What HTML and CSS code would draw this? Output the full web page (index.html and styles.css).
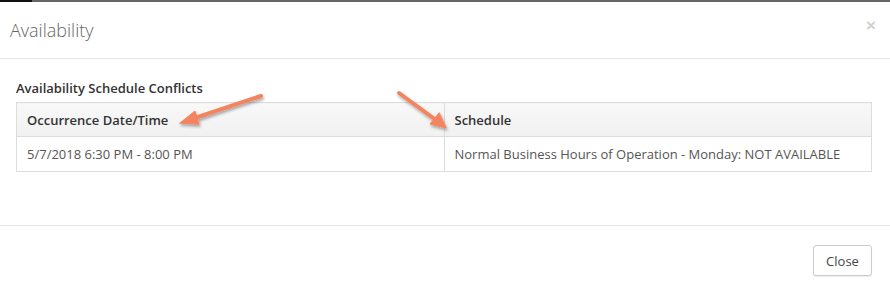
FILE: index.html
```html
<!DOCTYPE html>
<html lang="en">
  <head>
    <meta charset="UTF-8" />
    <meta name="viewport" content="width=device-width, initial-scale=1.0" />
    <title>Availability</title>
    <link rel="stylesheet" href="styles.css">
  </head>
  <body>
    <div class="topbar"><span class="topbar-dark"></span></div>

    <div class="modal">
      <div class="modal-header">
        <h4 class="modal-title">Availability</h4>
        <span class="modal-close">&times;</span>
      </div>

      <div class="modal-body">
        <h5 class="section-title">Availability Schedule Conflicts</h5>
        <table class="conflicts">
          <thead>
            <tr>
              <th>Occurrence Date/Time</th>
              <th>Schedule</th>
            </tr>
          </thead>
          <tbody>
            <tr>
              <td>5/7/2018 6:30 PM - 8:00 PM</td>
              <td>Normal Business Hours of Operation - Monday: NOT AVAILABLE</td>
            </tr>
          </tbody>
        </table>
      </div>

      <div class="modal-footer">
        <button class="btn">Close</button>
      </div>

      <!-- annotation arrows drawn over the screenshot -->
      <svg class="arrows" width="890" height="294" viewBox="0 0 890 294">
        <defs>
          <filter id="shadow" x="-20%" y="-20%" width="140%" height="140%">
            <feDropShadow dx="1" dy="2" stdDeviation="1.5" flood-color="#000" flood-opacity="0.35" />
          </filter>
        </defs>
        <g filter="url(#shadow)" fill="#f4845f" stroke="#f4845f" stroke-linecap="round" stroke-linejoin="round">
          <line x1="261" y1="96" x2="192" y2="119" stroke-width="4" />
          <polygon points="180,123 195,111 199,124" stroke-width="1" />
          <line x1="399" y1="93" x2="436" y2="120" stroke-width="4" />
          <polygon points="446,128 430,124 439,113" stroke-width="1" />
        </g>
      </svg>
    </div>
  </body>
</html>
```

FILE: styles.css
```css
body {
  margin: 0;
  padding: 0;
  font-family: "Open Sans", Arial, sans-serif;
  font-size: 13px;
  color: #555;
  background-color: #fff;
}

/* strip of the page behind the dialog */
.topbar {
  height: 2px;
  background-color: #666;
}

.topbar-dark {
  display: block;
  width: 32px;
  height: 2px;
  background-color: #111;
}

.modal {
  position: relative;
  height: 292px;
}

.modal-header {
  display: flex;
  justify-content: space-between;
  align-items: center;
  height: 56px;
  padding: 0 14px 0 10px;
  border-bottom: 1px solid #e5e5e5;
}

.modal-title {
  margin: 0;
  font-size: 18px;
  font-weight: 300;
  color: #666;
}

.modal-close {
  font-family: Arial, sans-serif;
  font-size: 17px;
  font-weight: bold;
  color: #d0d0d0;
  margin-top: -8px;
}

.modal-body {
  padding: 20px 18px 0 16px;
  height: 146px;
}

.section-title {
  margin: 0 0 5px 0;
  font-size: 13px;
  font-weight: 600;
  color: #333;
}

.conflicts {
  width: 100%;
  border-collapse: collapse;
}

.conflicts th,
.conflicts td {
  width: 50%;
  text-align: left;
  padding: 0 10px;
  border: 1px solid #ddd;
}

.conflicts th {
  height: 33px;
  font-weight: 600;
  color: #333;
  background: linear-gradient(#f8f8f8, #f1f1f1);
}

.conflicts td {
  height: 34px;
  color: #555;
}

.modal-footer {
  display: flex;
  justify-content: flex-end;
  border-top: 1px solid #e5e5e5;
  padding: 19px 18px 0 0;
}

.btn {
  font-family: "Open Sans", Arial, sans-serif;
  font-size: 13px;
  color: #444;
  background-color: #fff;
  border: 1px solid #ccc;
  border-radius: 3px;
  box-shadow: 0 1px 1px rgba(0, 0, 0, 0.08);
  width: 59px;
  height: 31px;
  padding: 0;
}

.arrows {
  position: absolute;
  top: -2px;
  left: 0;
  pointer-events: none;
}
```
